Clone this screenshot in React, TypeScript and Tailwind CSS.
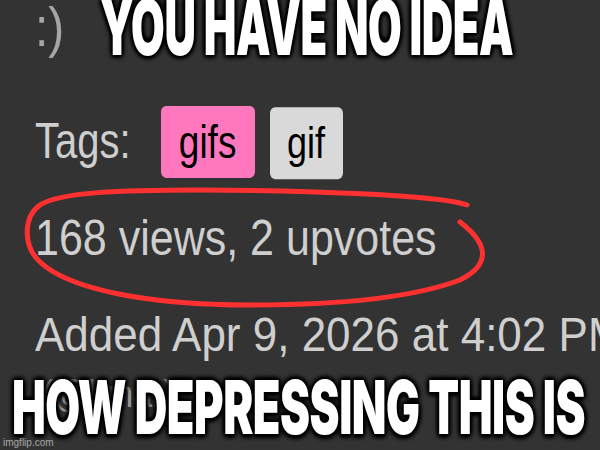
import React, { useLayoutEffect, useRef, useState } from 'react';

interface CaptionProps {
  text: string;
  width: number;
  stretch: number;
  className: string;
}

// Impact-ish caption: heavy font squeezed to the width of the reference
const Caption: React.FC<CaptionProps> = ({ text, width, stretch, className }) => {
  const ref = useRef<HTMLSpanElement>(null);
  const [scale, setScale] = useState(1);

  useLayoutEffect(() => {
    if (ref.current) {
      setScale(width / ref.current.offsetWidth);
    }
  }, [text, width]);

  return (
    <div className={`absolute ${className}`}>
      <span
        ref={ref}
        className="inline-block origin-top-left whitespace-nowrap font-['Inter','DejaVu_Sans',sans-serif] font-black uppercase leading-none tracking-[-0.01em] text-white [text-shadow:0_0_3px_#000,0_0_6px_#000,2px_2px_5px_#000,-2px_-2px_5px_#000,2px_-2px_5px_#000,-2px_2px_5px_#000]"
        style={{ transform: `scale(${scale}, ${stretch})` }}
      >
        {text}
      </span>
    </div>
  );
};

const App: React.FC = () => {
  return (
    <div className="relative h-[450px] w-[600px] overflow-hidden bg-[#333333] font-['Liberation_Sans',Arial,sans-serif] text-[#cfcfcf]">
      <div className="flex flex-col pl-[35px]">
        <div className="h-[106px]">
          <span className="inline-block origin-top-left scale-y-[1.15] text-[48px] leading-none text-[#a6a6a6]">
            :)
          </span>
        </div>

        <div className="h-[96px]">
          <div className="flex origin-top-left scale-y-[1.24] items-baseline">
            <span className="text-[40px] leading-none">Tags:</span>
            <span className="ml-[30px] flex h-[58px] w-[94px] items-center justify-center rounded-[5px] bg-[#ff78be] text-[37px] leading-none text-black">
              gifs
            </span>
            <span className="ml-[15px] flex h-[58px] w-[73px] items-center justify-center rounded-[5px] bg-[#d9d9d9] text-[36px] leading-none text-black">
              gif
            </span>
          </div>
        </div>

        <div className="h-[97px] pt-[11px]">
          <span className="inline-block origin-top-left scale-y-[1.16] text-[43px] leading-none">
            168 views, 2 upvotes
          </span>
        </div>

        <div className="h-[63px] pt-[11px]">
          <span className="inline-block origin-top-left scale-y-[1.11] whitespace-nowrap text-[44px] leading-none">
            Added Apr 9, 2026 at 4:02 PM
          </span>
        </div>

        <div className="pl-[7px] pt-[12px]">
          <span className="inline-block origin-top-left scale-y-[1.15] text-[34px] leading-none text-[#9a9a9a]">
            (@lunar)
          </span>
        </div>
      </div>

      <svg className="absolute left-0 top-0" width="600" height="450" viewBox="0 0 600 450" fill="none">
        <path
          d="M467 205 C440 195 300 190 200 190 C120 190 60 192 40 205 C24 216 22 245 40 262 C70 290 150 305 250 305 C350 305 420 295 460 280 C490 265 490 245 460 222"
          stroke="#ff3030"
          strokeWidth="5"
          strokeLinecap="round"
          strokeLinejoin="round"
        />
      </svg>

      <Caption text="YOU HAVE NO IDEA" width={413} stretch={1.17} className="left-[100px] top-[-27px] text-[66px]" />
      <Caption text="HOW DEPRESSING THIS IS" width={573} stretch={1.15} className="left-[12px] top-[355px] text-[65px]" />

      <div className="absolute bottom-[2px] left-[3px] text-[10px] leading-none text-[#a8a8a8]">
        imgflip.com
      </div>
    </div>
  );
};

export default App;
